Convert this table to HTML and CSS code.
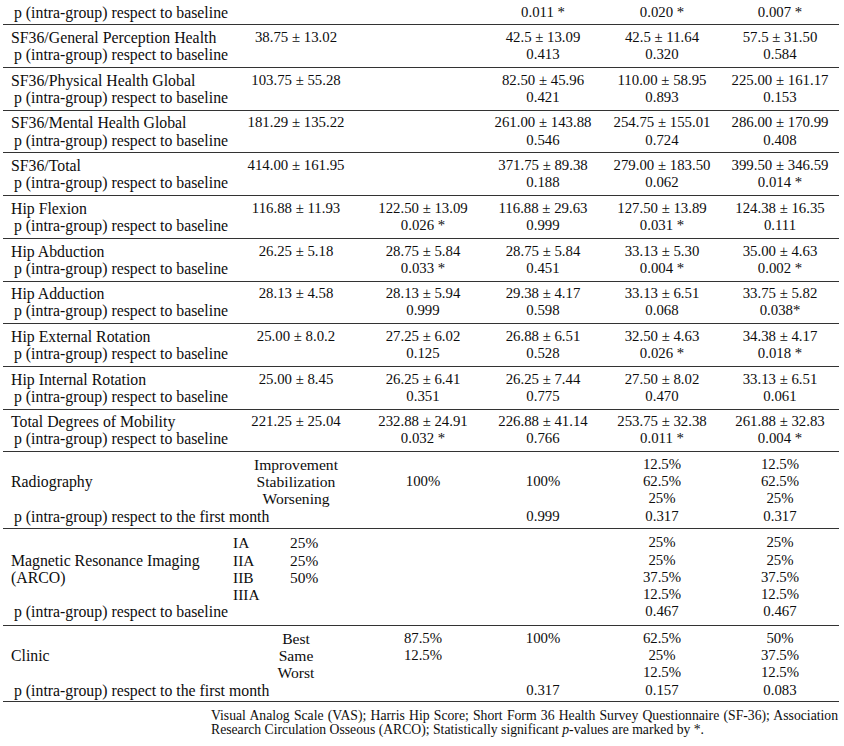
FILE: index.html
```html
<!DOCTYPE html>
<html lang="en">
<head>
<meta charset="utf-8">
<title>Table</title>
<link rel="stylesheet" href="styles.css">
</head>
<body>
<div class="page">
<table class="data">
<colgroup>
<col class="w1"><col class="w2"><col class="w3"><col class="w4"><col class="w5"><col class="w6">
</colgroup>
<tbody>
<tr class="first">
<td class="lbl"><span class="p">p (intra-group) respect to baseline</span></td>
<td></td><td></td><td>0.011 *</td><td>0.020 *</td><td>0.007 *</td>
</tr>
<tr>
<td class="lbl">SF36/General Perception Health<span class="p">p (intra-group) respect to baseline</span></td>
<td>38.75 ± 13.02</td><td></td><td>42.5 ± 13.09<br>0.413</td><td>42.5 ± 11.64<br>0.320</td><td>57.5 ± 31.50<br>0.584</td>
</tr>
<tr>
<td class="lbl">SF36/Physical Health Global<span class="p">p (intra-group) respect to baseline</span></td>
<td>103.75 ± 55.28</td><td></td><td>82.50 ± 45.96<br>0.421</td><td>110.00 ± 58.95<br>0.893</td><td>225.00 ± 161.17<br>0.153</td>
</tr>
<tr>
<td class="lbl">SF36/Mental Health Global<span class="p">p (intra-group) respect to baseline</span></td>
<td>181.29 ± 135.22</td><td></td><td>261.00 ± 143.88<br>0.546</td><td>254.75 ± 155.01<br>0.724</td><td>286.00 ± 170.99<br>0.408</td>
</tr>
<tr>
<td class="lbl">SF36/Total<span class="p">p (intra-group) respect to baseline</span></td>
<td>414.00 ± 161.95</td><td></td><td>371.75 ± 89.38<br>0.188</td><td>279.00 ± 183.50<br>0.062</td><td>399.50 ± 346.59<br>0.014 *</td>
</tr>
<tr>
<td class="lbl">Hip Flexion<span class="p">p (intra-group) respect to baseline</span></td>
<td>116.88 ± 11.93</td><td>122.50 ± 13.09<br>0.026 *</td><td>116.88 ± 29.63<br>0.999</td><td>127.50 ± 13.89<br>0.031 *</td><td>124.38 ± 16.35<br>0.111</td>
</tr>
<tr>
<td class="lbl">Hip Abduction<span class="p">p (intra-group) respect to baseline</span></td>
<td>26.25 ± 5.18</td><td>28.75 ± 5.84<br>0.033 *</td><td>28.75 ± 5.84<br>0.451</td><td>33.13 ± 5.30<br>0.004 *</td><td>35.00 ± 4.63<br>0.002 *</td>
</tr>
<tr>
<td class="lbl">Hip Adduction<span class="p">p (intra-group) respect to baseline</span></td>
<td>28.13 ± 4.58</td><td>28.13 ± 5.94<br>0.999</td><td>29.38 ± 4.17<br>0.598</td><td>33.13 ± 6.51<br>0.068</td><td>33.75 ± 5.82<br>0.038*</td>
</tr>
<tr>
<td class="lbl">Hip External Rotation<span class="p">p (intra-group) respect to baseline</span></td>
<td>25.00 ± 8.0.2</td><td>27.25 ± 6.02<br>0.125</td><td>26.88 ± 6.51<br>0.528</td><td>32.50 ± 4.63<br>0.026 *</td><td>34.38 ± 4.17<br>0.018 *</td>
</tr>
<tr>
<td class="lbl">Hip Internal Rotation<span class="p">p (intra-group) respect to baseline</span></td>
<td>25.00 ± 8.45</td><td>26.25 ± 6.41<br>0.351</td><td>26.25 ± 7.44<br>0.775</td><td>27.50 ± 8.02<br>0.470</td><td>33.13 ± 6.51<br>0.061</td>
</tr>
<tr>
<td class="lbl">Total Degrees of Mobility<span class="p">p (intra-group) respect to baseline</span></td>
<td>221.25 ± 25.04</td><td>232.88 ± 24.91<br>0.032 *</td><td>226.88 ± 41.14<br>0.766</td><td>253.75 ± 32.38<br>0.011 *</td><td>261.88 ± 32.83<br>0.004 *</td>
</tr>
<tr class="radio">
<td class="lbl">&nbsp;<br>Radiography<br>&nbsp;<span class="p">p (intra-group) respect to the first month</span></td>
<td class="txt">Improvement<br>Stabilization<br>Worsening</td>
<td>&nbsp;<br>100%</td>
<td>&nbsp;<br>100%<br>&nbsp;<br>0.999</td>
<td>12.5%<br>62.5%<br>25%<br>0.317</td>
<td>12.5%<br>62.5%<br>25%<br>0.317</td>
</tr>
<tr class="mri">
<td class="lbl">&nbsp;<br>Magnetic Resonance Imaging<br>(ARCO)<br>&nbsp;<span class="p">p (intra-group) respect to baseline</span></td>
<td class="grades">
<div class="grade-grid">
<span>IA</span><span>25%</span>
<span>IIA</span><span>25%</span>
<span>IIB</span><span>50%</span>
<span>IIIA</span><span></span>
</div>
</td>
<td></td>
<td></td>
<td>25%<br>25%<br>37.5%<br>12.5%<br>0.467</td>
<td>25%<br>25%<br>37.5%<br>12.5%<br>0.467</td>
</tr>
<tr class="clinic">
<td class="lbl">&nbsp;<br>Clinic<br>&nbsp;<span class="p">p (intra-group) respect to the first month</span></td>
<td class="txt">Best<br>Same<br>Worst</td>
<td>87.5%<br>12.5%</td>
<td>100%<br>&nbsp;<br>&nbsp;<br>0.317</td>
<td>62.5%<br>25%<br>12.5%<br>0.157</td>
<td>50%<br>37.5%<br>12.5%<br>0.083</td>
</tr>
</tbody>
</table>
<p class="note"><span class="l1">Visual Analog Scale (VAS); Harris Hip Score; Short Form 36 Health Survey Questionnaire (SF-36); Association</span><span class="l2">Research Circulation Osseous (ARCO); Statistically significant <i>p</i>-values are marked by *.</span></p>
</div>
</body>
</html>
```
FILE: styles.css
```css
html, body {
  margin: 0;
  padding: 0;
  background: #ffffff;
}

body {
  font-family: "Liberation Serif", "Times New Roman", serif;
  color: #0d0d0d;
}

.page {
  padding: 0 5px 0 3px;
}

.data {
  border-collapse: collapse;
  table-layout: fixed;
  width: 836px;
  font-size: 14.8px;
  line-height: 17.2px;
}

.w1 { width: 226px; }
.w2 { width: 134px; }
.w3 { width: 120px; }
.w4 { width: 120px; }
.w5 { width: 118px; }
.w6 { width: 118px; }

.data td {
  padding: 3.7px 0 3.6px 0;
  text-align: center;
  vertical-align: top;
  white-space: nowrap;
  border-bottom: 1px solid #333333;
}

.data td.lbl {
  text-align: left;
  padding-left: 8px;
  font-size: 15.8px;
}

.data td.txt {
  font-size: 15.6px;
}

.data tr.first td {
  padding-top: 3.6px;
}

.p {
  display: block;
  padding-left: 3px;
}

.data tr.mri td {
  padding-top: 5px;
  padding-bottom: 5px;
}

.data td.grades {
  text-align: left;
  padding-left: 4px;
  font-size: 15.4px;
}

.grade-grid {
  display: grid;
  grid-template-columns: 57px auto;
}

.grade-grid span {
  height: 17.2px;
}

.data tr.clinic td {
  padding-bottom: 2px;
}

.note {
  margin: 7px 0 0 208px;
  width: 627px;
  font-size: 13.7px;
  line-height: 14px;
}

.l1 {
  display: block;
  white-space: nowrap;
  text-align: justify;
  text-align-last: justify;
}

.l2 {
  display: block;
}
```
